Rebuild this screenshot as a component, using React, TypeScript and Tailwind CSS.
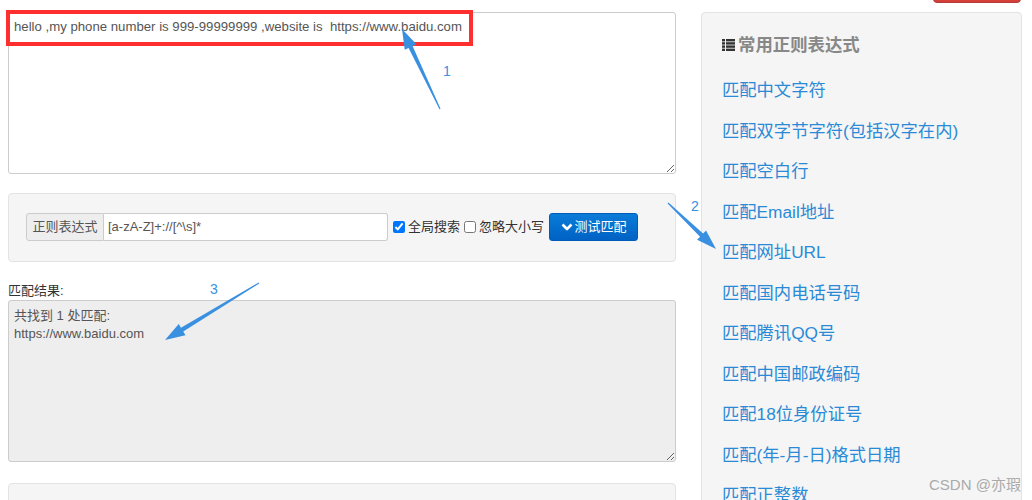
import React from 'react';

const links = [
  '匹配中文字符',
  '匹配双字节字符(包括汉字在内)',
  '匹配空白行',
  '匹配Email地址',
  '匹配网址URL',
  '匹配国内电话号码',
  '匹配腾讯QQ号',
  '匹配中国邮政编码',
  '匹配18位身份证号',
  '匹配(年-月-日)格式日期',
  '匹配正整数',
];

// tapered annotation arrow, from tail to tip
function arrowPoints(tx: number, ty: number, px: number, py: number) {
  const dx = px - tx;
  const dy = py - ty;
  const len = Math.hypot(dx, dy);
  const ux = dx / len;
  const uy = dy / len;
  const nx = -uy;
  const ny = ux;
  const head = 20;
  const hw = 6.5;
  const sw = 2.2;
  const bx = px - ux * head;
  const by = py - uy * head;
  const pts = [
    [px, py],
    [bx + nx * hw, by + ny * hw],
    [bx + nx * sw, by + ny * sw],
    [tx + nx * 0.6, ty + ny * 0.6],
    [tx - nx * 0.6, ty - ny * 0.6],
    [bx - nx * sw, by - ny * sw],
    [bx - nx * hw, by - ny * hw],
  ];
  return pts.map((p) => p.join(',')).join(' ');
}

const sans = "font-['Liberation_Sans','Noto_Sans_CJK_SC',sans-serif]";

const App = () => {
  return (
    <div className={`relative w-[1032px] h-[500px] overflow-hidden bg-white ${sans}`}>
      <div className="flex pl-2 gap-[25px]">
        {/* Left column */}
        <div className="w-[668px] shrink-0">
          <div className="h-[12px] overflow-hidden">
            <div className="-mt-[26px] h-[30px] overflow-hidden text-[24px] leading-[30px] text-[#bbb]">正则表达式在线测试工具</div>
          </div>

          <textarea
            readOnly
            value="hello ,my phone number is 999-99999999 ,website is  https://www.baidu.com"
            className="block w-full h-[162px] border border-[#ccc] rounded-[3px] bg-white px-[5px] py-[5px] text-[13.2px] leading-[18px] text-[#555] outline-none"
          />

          <div className="mt-[19px] h-[69px] rounded-[4px] border border-[#e3e3e3] bg-[#f5f5f5] pl-[17px] pt-[19px]">
            <div className="flex items-center">
              <div className="flex h-[28px]">
                <span className="flex items-center justify-center w-[78px] whitespace-nowrap bg-[#eee] border border-[#ccc] rounded-l-[3px] text-[13px] text-[#555]">
                  正则表达式
                </span>
                <div className="flex items-center w-[284px] bg-white border border-l-0 border-[#ccc] rounded-r-[3px] px-[4px] text-[13px] text-[#555]">
                  {'[a-zA-Z]+://[^\\s]*'}
                </div>
              </div>
              <label className="flex items-center ml-[5px] text-[13px] text-[#333] whitespace-nowrap">
                <input type="checkbox" defaultChecked className="w-[12px] h-[12px] mr-[3px]" />
                全局搜索
              </label>
              <label className="flex items-center ml-[4px] text-[13px] text-[#333] whitespace-nowrap">
                <input type="checkbox" className="w-[12px] h-[12px] mr-[3px]" />
                忽略大小写
              </label>
              <button className="ml-[5px] flex items-center gap-[2px] h-[28px] w-[89px] justify-center rounded-[3px] border border-[#005cb8] bg-gradient-to-b from-[#0b7bd8] to-[#0062c4] text-[13px] text-white">
                <svg width="12" height="10" viewBox="0 0 12 10">
                  <path d="M1.5 2.5 L6 7 L10.5 2.5" stroke="white" strokeWidth="2.6" fill="none" strokeLinejoin="round" />
                </svg>
                测试匹配
              </button>
            </div>
          </div>

          <div className="mt-[20px] h-[18px] text-[13px] leading-[18px] text-[#333]">匹配结果:</div>

          <textarea
            readOnly
            value={'共找到 1 处匹配:\nhttps://www.baidu.com'}
            className="block w-full h-[162px] border border-[#ccc] rounded-[3px] bg-[#eee] px-[5px] py-[6px] text-[13px] leading-[18px] text-[#555] outline-none"
          />

          <div className="mt-[21px] h-[40px] rounded-[4px] border border-[#e3e3e3] bg-[#f5f5f5]" />
        </div>

        {/* Right column */}
        <div className="w-[321px] shrink-0">
          <div className="h-[12px] flex justify-end pr-[1px]">
            <div className="-mt-[30px] h-[33px] w-[88px] rounded-[4px] border border-[#b33a36] bg-[#d43f3a]" />
          </div>
          <div className="h-[500px] rounded-[4px] border border-[#e3e3e3] bg-[#f5f5f5] pl-[20px] pt-[20px]">
            <div className="flex items-center h-[24px] text-[17.4px] font-bold text-[#888]">
              <svg width="13" height="12" viewBox="0 0 13 12" className="mr-[3px]">
                <rect x="0" y="0" width="3" height="2.4" fill="#333" />
                <rect x="4" y="0" width="9" height="2.4" fill="#333" />
                <rect x="0" y="3.2" width="3" height="2.4" fill="#333" />
                <rect x="4" y="3.2" width="9" height="2.4" fill="#333" />
                <rect x="0" y="6.4" width="3" height="2.4" fill="#333" />
                <rect x="4" y="6.4" width="9" height="2.4" fill="#333" />
                <rect x="0" y="9.6" width="3" height="2.4" fill="#333" />
                <rect x="4" y="9.6" width="9" height="2.4" fill="#333" />
              </svg>
              常用正则表达式
            </div>
            <div className="mt-[14px]">
              {links.map((l) => (
                <div key={l} className="h-[40.5px] flex items-center text-[17.3px] text-[#2a8ad6]">
                  {l}
                </div>
              ))}
            </div>
          </div>
        </div>
      </div>

      {/* Annotations */}
      <div className="absolute left-[6px] top-[10px] w-[467px] h-[36px] border-[4px] border-[#ff2f2f]" />
      <svg className="absolute left-0 top-0 pointer-events-none" width="1032" height="500">
        <polygon points={arrowPoints(440, 109, 402, 29)} fill="#3a90e0" />
        <polygon points={arrowPoints(668, 203, 716, 249)} fill="#3a90e0" />
        <polygon points={arrowPoints(259, 283, 165, 340)} fill="#3a90e0" />
      </svg>
      <div className="absolute left-[443px] top-[61px] text-[14px] text-[#3a90e0]">1</div>
      <div className="absolute left-[691px] top-[196px] text-[14px] text-[#3a90e0]">2</div>
      <div className="absolute left-[210px] top-[279px] text-[14px] text-[#3a90e0]">3</div>
      <div className="absolute left-[929px] top-[474px] text-[15px] text-[#aaa]">CSDN @亦瑕</div>
    </div>
  );
};

export default App;
